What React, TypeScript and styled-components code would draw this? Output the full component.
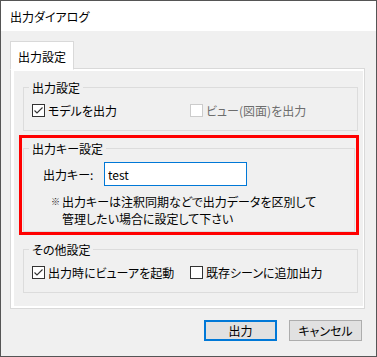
import { useState } from 'react'
import styled, { createGlobalStyle } from 'styled-components'

const GlobalStyle = createGlobalStyle`
  html, body {
    margin: 0;
    padding: 0;
    background: #ffffff;
  }
  body {
    font-family: 'Noto Sans CJK JP', 'Noto Sans', sans-serif;
    font-size: 12px;
    font-feature-settings: 'palt';
    color: #000000;
  }
`

const Window = styled.div`
  width: 377px;
  height: 357px;
  box-sizing: border-box;
  border: 1px solid #555555;
  display: flex;
  flex-direction: column;
  background: #f0f0f0;
`

const TitleBar = styled.div`
  height: 30px;
  flex: none;
  background: #ffffff;
  display: flex;
  align-items: center;
  padding-left: 9px;
  font-size: 12px;
`

const Body = styled.div`
  flex: 1;
  display: flex;
  flex-direction: column;
  padding: 10px 11px 0 9px;
`

const TabStrip = styled.div`
  display: flex;
  height: 28px;
  margin-bottom: -1px;
  position: relative;
  z-index: 1;
`

const Tab = styled.div<{ $active?: boolean }>`
  box-sizing: border-box;
  width: 64px;
  height: 29px;
  border: 1px solid #d9d9d9;
  border-bottom-color: ${({ $active }) => ($active ? '#ffffff' : '#d9d9d9')};
  background: ${({ $active }) => ($active ? '#ffffff' : '#f0f0f0')};
  display: flex;
  align-items: center;
  justify-content: center;
  font-size: 12px;
  padding-top: 1px;
`

const TabPanel = styled.div`
  box-sizing: border-box;
  height: 241px;
  flex: none;
  border: 1px solid #d9d9d9;
  background: #ffffff;
  padding: 2px 1px 2px 3px;
`

const Page = styled.div`
  height: 100%;
  background: #f0f0f0;
  display: flex;
  flex-direction: column;
  padding: 8px 5px 0 9px;
  box-sizing: border-box;
`

const Group = styled.fieldset<{ $height: number }>`
  margin: 0;
  box-sizing: border-box;
  height: ${({ $height }) => $height}px;
  flex: none;
  border: 1px solid #dcdcdc;
  padding: 0 8px;
  min-width: 0;
`

const Legend = styled.legend`
  padding: 0 3px;
  margin-left: -3px;
  line-height: 17px;
  font-size: 12px;
`

const CheckRow = styled.div`
  display: grid;
  grid-template-columns: 158px auto;
  align-items: center;
  margin-top: 7px;
`

const CheckItem = styled.label<{ $disabled?: boolean }>`
  display: flex;
  align-items: center;
  gap: 3px;
  min-width: 0;
  color: ${({ $disabled }) => ($disabled ? '#6d6d6d' : '#000000')};
  line-height: 15px;
  white-space: nowrap;
`

const Box = styled.span<{ $disabled?: boolean }>`
  width: 13px;
  height: 13px;
  box-sizing: border-box;
  border: 1px solid ${({ $disabled }) => ($disabled ? '#cccccc' : '#333333')};
  background: #ffffff;
  display: flex;
  flex: none;

  svg {
    display: block;
  }
`

const Highlight = styled.div`
  flex: none;
  margin: 4px -1px 0 -4px;
  border: 3px solid #ff0000;
  padding: 2px 1px 0 1px;
`

const KeyRow = styled.div`
  display: flex;
  align-items: center;
  margin-top: 5px;
  padding-left: 11px;
`

const KeyLabel = styled.span`
  width: 61px;
  flex: none;
`

const KeyInput = styled.input`
  box-sizing: border-box;
  width: 143px;
  height: 24px;
  border: 1px solid #0078d7;
  outline: none;
  padding: 0 3px;
  font-family: 'Noto Sans CJK JP', 'Noto Sans', sans-serif;
  font-size: 12px;
  color: #000000;
  background: #ffffff;
`

const Note = styled.div`
  display: flex;
  margin-top: 7px;
  padding-left: 19px;
  line-height: 17px;
`

const Mark = styled.span`
  width: 11px;
  flex: none;
  font-size: 9px;
  color: #222222;
`

const Spacer = styled.div`
  height: 6px;
  flex: none;
`

const Buttons = styled.div`
  display: flex;
  justify-content: flex-end;
  gap: 12px;
  margin-top: 11px;
  padding-right: 3px;
`

const Button = styled.button<{ $primary?: boolean }>`
  box-sizing: border-box;
  width: 73px;
  height: 21px;
  padding: 0;
  background: #e1e1e1;
  border: ${({ $primary }) => ($primary ? '2px solid #0078d7' : '1px solid #adadad')};
  font-family: 'Noto Sans CJK JP', 'Noto Sans', sans-serif;
  font-size: 12px;
  font-feature-settings: 'palt';
  color: #000000;
  line-height: 1;
`

function CheckBox({ checked, disabled }: { checked: boolean; disabled?: boolean }) {
  return (
    <Box $disabled={disabled}>
      {checked && (
        <svg width="11" height="11" viewBox="0 0 11 11">
          <path d="M1.5 5.5 L4 8 L9.5 2.5" fill="none" stroke="#333333" strokeWidth="1.1" />
        </svg>
      )}
    </Box>
  )
}

function App() {
  const [outputKey, setOutputKey] = useState('test')

  return (
    <>
      <GlobalStyle />
      <Window>
        <TitleBar>出力ダイアログ</TitleBar>
        <Body>
          <TabStrip>
            <Tab $active>出力設定</Tab>
          </TabStrip>
          <TabPanel>
            <Page>
              <Group $height={52}>
                <Legend>出力設定</Legend>
                <CheckRow>
                  <CheckItem>
                    <CheckBox checked />
                    モデルを出力
                  </CheckItem>
                  <CheckItem $disabled>
                    <CheckBox checked={false} disabled />
                    ビュー(図面)を出力
                  </CheckItem>
                </CheckRow>
              </Group>
              <Highlight>
                <Group $height={92}>
                  <Legend>出力キー設定</Legend>
                  <KeyRow>
                    <KeyLabel>出力キー:</KeyLabel>
                    <KeyInput value={outputKey} onChange={(e) => setOutputKey(e.target.value)} />
                  </KeyRow>
                  <Note>
                    <Mark>※</Mark>
                    <span>
                      出力キーは注釈同期などで出力データを区別して
                      <br />
                      管理したい場合に設定して下さい
                    </span>
                  </Note>
                </Group>
              </Highlight>
              <Spacer />
              <Group $height={52}>
                <Legend>その他設定</Legend>
                <CheckRow>
                  <CheckItem>
                    <CheckBox checked />
                    出力時にビューアを起動
                  </CheckItem>
                  <CheckItem>
                    <CheckBox checked={false} />
                    既存シーンに追加出力
                  </CheckItem>
                </CheckRow>
              </Group>
            </Page>
          </TabPanel>
          <Buttons>
            <Button $primary>出力</Button>
            <Button>キャンセル</Button>
          </Buttons>
        </Body>
      </Window>
    </>
  )
}

export default App
